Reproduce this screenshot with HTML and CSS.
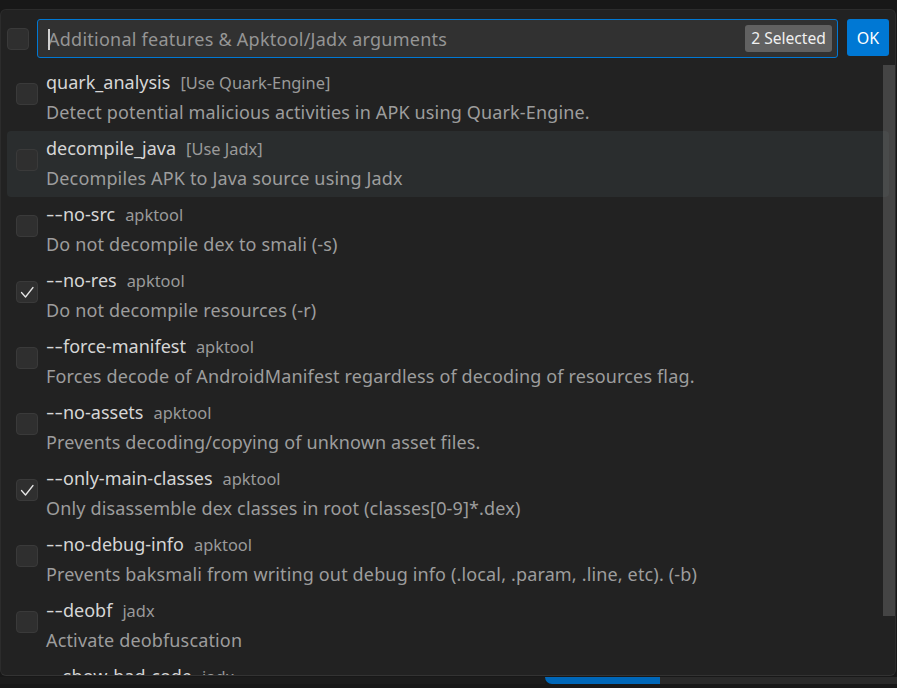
FILE: index.html
```html
<!DOCTYPE html>
<html lang="en">
<head>
<meta charset="utf-8">
<title>Quick pick</title>
<link rel="stylesheet" href="styles.css">
</head>
<body>
<div class="widget">
  <div class="header">
    <span class="cb cb-all"></span>
    <div class="input">
      <span class="caret"></span>
      <span class="placeholder">Additional features &amp; Apktool/Jadx arguments</span>
      <span class="badge">2 Selected</span>
    </div>
    <button class="ok">OK</button>
  </div>
  <div class="list">
    <div class="row">
      <span class="cb"></span>
      <div class="text">
        <div class="label">quark_analysis<span class="detail">[Use Quark-Engine]</span></div>
        <div class="desc">Detect potential malicious activities in APK using Quark-Engine.</div>
      </div>
    </div>
    <div class="row hover">
      <span class="cb"></span>
      <div class="text">
        <div class="label">decompile_java<span class="detail">[Use Jadx]</span></div>
        <div class="desc">Decompiles APK to Java source using Jadx</div>
      </div>
    </div>
    <div class="row">
      <span class="cb"></span>
      <div class="text">
        <div class="label"><span class="dash">--</span>no-src<span class="detail">apktool</span></div>
        <div class="desc">Do not decompile dex to smali (-s)</div>
      </div>
    </div>
    <div class="row">
      <span class="cb checked"><svg viewBox="0 0 22 22" width="22" height="22"><polyline points="5.5,11.5 9.5,16 17,6.5" fill="none" stroke="#e6e6e6" stroke-width="1.3" stroke-linejoin="round" stroke-linecap="round"/></svg></span>
      <div class="text">
        <div class="label"><span class="dash">--</span>no-res<span class="detail">apktool</span></div>
        <div class="desc">Do not decompile resources (-r)</div>
      </div>
    </div>
    <div class="row">
      <span class="cb"></span>
      <div class="text">
        <div class="label"><span class="dash">--</span>force-manifest<span class="detail">apktool</span></div>
        <div class="desc">Forces decode of AndroidManifest regardless of decoding of resources flag.</div>
      </div>
    </div>
    <div class="row">
      <span class="cb"></span>
      <div class="text">
        <div class="label"><span class="dash">--</span>no-assets<span class="detail">apktool</span></div>
        <div class="desc">Prevents decoding/copying of unknown asset files.</div>
      </div>
    </div>
    <div class="row">
      <span class="cb checked"><svg viewBox="0 0 22 22" width="22" height="22"><polyline points="5.5,11.5 9.5,16 17,6.5" fill="none" stroke="#e6e6e6" stroke-width="1.3" stroke-linejoin="round" stroke-linecap="round"/></svg></span>
      <div class="text">
        <div class="label"><span class="dash">--</span>only-main-classes<span class="detail">apktool</span></div>
        <div class="desc">Only disassemble dex classes in root (classes[0-9]*.dex)</div>
      </div>
    </div>
    <div class="row">
      <span class="cb"></span>
      <div class="text">
        <div class="label"><span class="dash">--</span>no-debug-info<span class="detail">apktool</span></div>
        <div class="desc">Prevents baksmali from writing out debug info (.local, .param, .line, etc). (-b)</div>
      </div>
    </div>
    <div class="row">
      <span class="cb"></span>
      <div class="text">
        <div class="label"><span class="dash">--</span>deobf<span class="detail">jadx</span></div>
        <div class="desc">Activate deobfuscation</div>
      </div>
    </div>
    <div class="row">
      <span class="cb"></span>
      <div class="text">
        <div class="label"><span class="dash">--</span>show-bad-code<span class="detail">jadx</span></div>
        <div class="desc">Show inconsistent code (incorrectly decompiled)</div>
      </div>
    </div>
    <div class="scrollbar"></div>
  </div>
</div>
<div class="below">
  <span class="below-left"></span>
  <span class="below-blue"></span>
  <span class="below-rest"></span>
</div>
</body>
</html>
```

FILE: styles.css
```css
* { box-sizing: border-box; }
html, body { margin: 0; padding: 0; }
body {
  background: #181818;
  font-family: "Noto Sans", "Open Sans", sans-serif;
  width: 897px;
  height: 688px;
  overflow: hidden;
}
.widget {
  margin-top: 9px;
  width: 896px;
  height: 667px;
  background: #222222;
  border: 1px solid #2c2c2c;
  border-bottom-color: #333333;
  border-radius: 6px;
  overflow: hidden;
  display: flex;
  flex-direction: column;
}
.header {
  height: 55px;
  flex: none;
  display: flex;
  align-items: flex-start;
  padding: 9px 0 0 6px;
}
.cb {
  flex: none;
  width: 22px;
  height: 22px;
  background: #2f2f2f;
  border: 1px solid #3a3a3a;
  border-radius: 4px;
  display: flex;
  align-items: center;
  justify-content: center;
}
.cb svg { display: block; margin: -1px; }
.cb-all { margin-top: 9px; }
.input {
  margin-left: 8px;
  width: 801px;
  height: 39px;
  background: #313131;
  border: 1px solid #0078d4;
  border-radius: 3px;
  display: flex;
  align-items: center;
  padding: 0 5px 0 10px;
  position: relative;
}
.caret {
  position: absolute;
  left: 10px;
  top: 9px;
  width: 2px;
  height: 21px;
  background: #d0d0d0;
}
.placeholder {
  flex: 1;
  color: #959595;
  font-size: 18px;
  letter-spacing: 0.25px;
  white-space: nowrap;
}
.badge {
  background: #616161;
  color: #f0f0f0;
  font-size: 15.6px;
  height: 27px;
  line-height: 27px;
  padding: 0;
  border-radius: 3px;
  width: 87px;
  text-align: center;
}
.ok {
  margin-left: 9px;
  width: 42px;
  height: 37px;
  background: #0078d4;
  color: #ffffff;
  border: none;
  border-radius: 3px;
  font-family: inherit;
  font-size: 16px;
  padding: 0;
}
.list {
  position: relative;
  flex: 1;
  overflow: hidden;
}
.row {
  height: 66px;
  margin: 0 6px;
  display: flex;
  align-items: flex-start;
  padding: 18px 0 0 9px;
  border-radius: 4px;
}
.row.hover { background: #2a2d2e; }
.text {
  margin-left: 8px;
  margin-top: -16px;
  white-space: nowrap;
}
.label {
  color: #d6d6d6;
  font-size: 18px;
  line-height: 30px;
  height: 30px;
}
.dash {
  display: inline-block;
  width: 17px;
  transform: scaleX(1.45);
  transform-origin: 0 50%;
}
.detail {
  color: #9a9a9a;
  font-size: 16.4px;
  margin-left: 10px;
}
.desc {
  color: #9d9d9d;
  font-size: 18px;
  letter-spacing: 0.15px;
  line-height: 30px;
  height: 30px;
}
.scrollbar {
  position: absolute;
  left: 882px;
  top: 0;
  width: 14px;
  height: 551px;
  background: rgba(121, 121, 121, 0.4);
}
.below {
  display: flex;
  height: 7px;
  margin-top: 1px;
}
.below-left { width: 545px; background: #1c1c1c; }
.below-blue { width: 115px; background: #0067b8; border-bottom-left-radius: 7px; }
.below-rest { flex: 1; background: #2a2a2a; }
```
